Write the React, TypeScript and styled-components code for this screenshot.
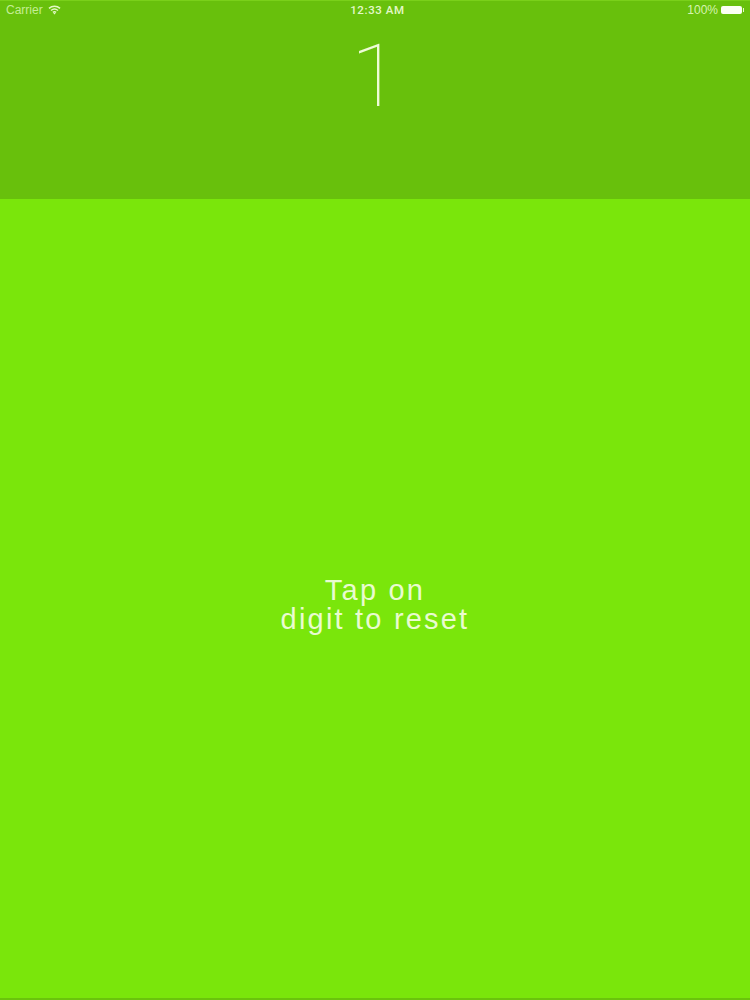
import React from 'react';
import styled, { createGlobalStyle } from 'styled-components';

const GlobalStyle = createGlobalStyle`
  html, body {
    margin: 0;
    padding: 0;
  }
  body {
    font-family: "Liberation Sans", Arial, sans-serif;
  }
`;

const Screen = styled.div`
  width: 750px;
  height: 1000px;
  display: flex;
  flex-direction: column;
  overflow: hidden;
  background: #7ae60b;
  border-bottom: 2px solid #6ac40c;
  box-sizing: border-box;
`;

const Header = styled.header`
  height: 199px;
  flex-shrink: 0;
  display: flex;
  flex-direction: column;
  background: #68c00c;
  border-top: 1px solid #7ad01a;
  box-sizing: border-box;
`;

const StatusBar = styled.div`
  height: 18px;
  display: grid;
  grid-template-columns: 1fr auto 1fr;
  align-items: center;
  padding: 0 5px 0 6px;
  font-size: 12px;
`;

const StatusLeft = styled.div`
  display: flex;
  align-items: center;
  gap: 5px;
  color: #c4ee94;
`;

const StatusTime = styled.div`
  padding-left: 4px;
  font-family: Roboto, sans-serif;
  font-weight: 500;
  font-size: 11.5px;
  letter-spacing: 0.6px;
  color: #e4f8c8;
`;

const StatusRight = styled.div`
  display: flex;
  align-items: center;
  justify-content: flex-end;
  gap: 3px;
  color: #d6f4b0;
`;

const Battery = styled.div`
  position: relative;
  width: 21px;
  height: 8px;
  background: #fbfff4;
  border-radius: 2px;
  margin-right: 3px;

  &::after {
    content: '';
    position: absolute;
    right: -2px;
    top: 2px;
    width: 1px;
    height: 4px;
    background: #e4f8c8;
  }
`;

const CounterDigit = styled.button`
  display: block;
  margin: 3px auto 0;
  padding: 0;
  border: 0;
  background: none;
  color: #eefbd8;
  font-family: Roboto, sans-serif;
  font-weight: 100;
  font-size: 88px;
  line-height: 108px;
`;

const Body = styled.main`
  flex: 1;
  display: flex;
  align-items: center;
  justify-content: center;
  padding-top: 13px;
`;

const Hint = styled.div`
  color: #e9fbd0;
  font-size: 29px;
  line-height: 29px;
  letter-spacing: 2.2px;
  text-align: center;
`;

const WifiIcon = () => (
  <svg width="13" height="10" viewBox="0 0 13 10" fill="none" stroke="#e4f8c8" strokeWidth="1.5">
    <path d="M1 3.4C4.2 .6 8.8 .6 12 3.4" />
    <path d="M3 5.5C5 3.9 8 3.9 10 5.5" />
    <path d="M4.9 7.4C5.8 6.7 7.2 6.7 8.1 7.4" />
    <path d="M6.5 9.6L5.4 8.4C6 8 7 8 7.6 8.4Z" fill="#e4f8c8" stroke="none" />
  </svg>
);

const App: React.FC = () => {
  return (
    <>
      <GlobalStyle />
      <Screen>
        <Header>
          <StatusBar>
            <StatusLeft>
              Carrier
              <WifiIcon />
            </StatusLeft>
            <StatusTime>12:33 AM</StatusTime>
            <StatusRight>
              100%
              <Battery />
            </StatusRight>
          </StatusBar>
          <CounterDigit>1</CounterDigit>
        </Header>
        <Body>
          <Hint>
            Tap on
            <br />
            digit to reset
          </Hint>
        </Body>
      </Screen>
    </>
  );
};

export default App;
